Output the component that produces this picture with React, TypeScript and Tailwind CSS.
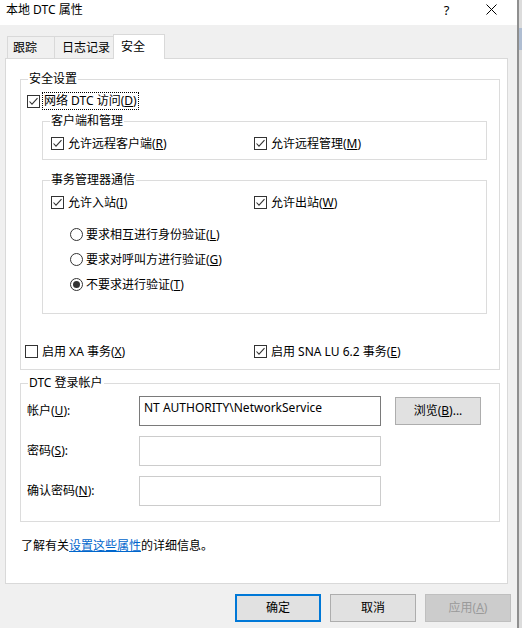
import type { ReactNode } from "react";

function Box({ checked }: { checked?: boolean }) {
  return (
    <span className="w-[13px] h-[13px] border border-[#333333] bg-white flex items-center justify-center shrink-0">
      {checked && (
        <svg width="11" height="11" viewBox="0 0 11 11">
          <path d="M1.5 5.5 L4 8.2 L9.5 2.2" stroke="#333333" strokeWidth="1.1" fill="none" />
        </svg>
      )}
    </span>
  );
}

function Radio({ checked }: { checked?: boolean }) {
  return (
    <span className="w-[13px] h-[13px] rounded-full border border-[#333333] bg-white flex items-center justify-center shrink-0">
      {checked && <span className="w-[7px] h-[7px] rounded-full bg-[#333333]" />}
    </span>
  );
}

function Check({ checked, children }: { checked?: boolean; children: ReactNode }) {
  return (
    <div className="flex items-center gap-[4px]">
      <Box checked={checked} />
      <span>{children}</span>
    </div>
  );
}

function Group({ title, className, children }: { title: string; className: string; children: ReactNode }) {
  return (
    <fieldset className={"border border-[#dcdcdc] min-w-0 " + className}>
      <legend className="ml-[7px] px-[1px] leading-[14px]">{title}</legend>
      {children}
    </fieldset>
  );
}

function Field({ label, value, focus }: { label: ReactNode; value?: string; focus?: boolean }) {
  return (
    <div className="flex items-center h-[30px]">
      <span className="w-[112px]">{label}</span>
      <div
        className={
          "w-[242px] h-[30px] bg-white border pl-[4px] pt-[4px] " +
          (focus ? "border-[#7a7a7a]" : "border-[#cccccc]")
        }
      >
        {value}
      </div>
    </div>
  );
}

export default function App() {
  return (
    <div className="flex w-[522px] h-[628px] bg-[#f0f0f0] text-[12px] leading-[14px] text-black font-[family-name:'Noto_Sans','Noto_Sans_CJK_SC',sans-serif]">
      <div className="w-[517px] flex flex-col">
        {/* title bar */}
        <div className="h-[25px] bg-white flex items-start pt-[3px] pl-[6px]">
          <span className="text-[12px]">本地 DTC 属性</span>
          <span className="ml-[361px] text-[13px] leading-[14px]">?</span>
          <svg className="ml-[37px] mt-[1px]" width="11" height="11" viewBox="0 0 11 11">
            <path d="M0.5 0.5 L10.5 10.5 M10.5 0.5 L0.5 10.5" stroke="#000" strokeWidth="1" />
          </svg>
        </div>

        <div className="pl-[5px] flex flex-col">
          {/* tabs */}
          <div className="mt-[9px] h-[24px] flex items-end pl-[2px]">
            <div className="w-[47px] h-[22px] border-l border-t border-[#d9d9d9] flex items-center pl-[5px]">跟踪</div>
            <div className="w-[59px] h-[22px] border-l border-t border-[#d9d9d9] flex items-center pl-[7px]">日志记录</div>
            <div className="relative z-10 w-[52px] h-[25px] -mb-px bg-white border-l border-t border-r border-[#d9d9d9] flex items-center pl-[7px] pb-[1px]">
              安全
            </div>
          </div>

          {/* panel */}
          <div className="w-[503px] h-[526px] bg-white border border-[#d9d9d9] flex flex-col">
            <Group title="安全设置" className="ml-[14px] mt-[13px] w-[480px] pb-[9px]">
              <div className="ml-[6px] mt-[6px] h-[18px] flex items-center gap-[2px]">
                <Box checked />
                <span className="border border-dotted border-black px-[1px] h-[18px] flex items-center">
                  网络 DTC 访问(<u>D</u>)
                </span>
              </div>

              <Group title="客户端和管理" className="ml-[21px] mt-[4px] w-[445px] pb-[7px]">
                <div className="ml-[8px] mt-[7px] h-[17px] flex items-center">
                  <div className="w-[203px]">
                    <Check checked>
                      允许远程客户端(<u>R</u>)
                    </Check>
                  </div>
                  <Check checked>
                    允许远程管理(<u>M</u>)
                  </Check>
                </div>
              </Group>

              <Group title="事务管理器通信" className="ml-[21px] mt-[13px] w-[445px] pb-[20px]">
                <div className="ml-[8px] mt-[7px] h-[17px] flex items-center">
                  <div className="w-[203px]">
                    <Check checked>
                      允许入站(<u>I</u>)
                    </Check>
                  </div>
                  <Check checked>
                    允许出站(<u>W</u>)
                  </Check>
                </div>
                <div className="ml-[27px] mt-[15px] flex flex-col gap-[8px]">
                  <div className="h-[17px] flex items-center gap-[3px]">
                    <Radio />
                    <span>
                      要求相互进行身份验证(<u>L</u>)
                    </span>
                  </div>
                  <div className="h-[17px] flex items-center gap-[3px]">
                    <Radio />
                    <span>
                      要求对呼叫方进行验证(<u>G</u>)
                    </span>
                  </div>
                  <div className="h-[17px] flex items-center gap-[3px]">
                    <Radio checked />
                    <span>
                      不要求进行验证(<u>T</u>)
                    </span>
                  </div>
                </div>
              </Group>

              <div className="ml-[4px] mt-[29px] h-[17px] flex items-center">
                <div className="w-[229px]">
                  <Check>
                    启用 XA 事务(<u>X</u>)
                  </Check>
                </div>
                <Check checked>
                  启用 SNA LU 6.2 事务(<u>E</u>)
                </Check>
              </div>
            </Group>

            <Group title="DTC 登录帐户" className="ml-[14px] mt-[6px] w-[480px] pb-[15px]">
              <div className="ml-[6px] mt-[6px] flex flex-col gap-[10px]">
                <div className="flex items-start">
                  <Field
                    label={
                      <>
                        帐户(<u>U</u>):
                      </>
                    }
                    value="NT AUTHORITY\NetworkService"
                    focus
                  />
                  <button className="ml-[14px] mt-[1px] w-[86px] h-[28px] bg-[#e1e1e1] border border-[#adadad] flex items-center justify-center">
                    浏览(<u>B</u>)...
                  </button>
                </div>
                <Field
                  label={
                    <>
                      密码(<u>S</u>):
                    </>
                  }
                />
                <Field
                  label={
                    <>
                      确认密码(<u>N</u>):
                    </>
                  }
                />
              </div>
            </Group>

            <p className="ml-[15px] mt-[17px]">
              了解有关<span className="text-[#0066cc] underline">设置这些属性</span>的详细信息。
            </p>
          </div>

          {/* buttons */}
          <div className="mt-[10px] ml-[230px] flex gap-[9px]">
            <button className="w-[86px] h-[28px] bg-[#e1e1e1] border-2 border-[#0078d7] flex items-center justify-center">
              确定
            </button>
            <button className="w-[86px] h-[28px] bg-[#e1e1e1] border border-[#adadad] flex items-center justify-center">
              取消
            </button>
            <button className="w-[86px] h-[28px] bg-[#cccccc] border border-[#bfbfbf] text-[#9a9a9a] flex items-center justify-center">
              应用(<u>A</u>)
            </button>
          </div>
        </div>
      </div>

      {/* edge of window behind */}
      <div className="w-[2px] bg-[#8f8f8f]" />
      <div className="flex-1 flex flex-col bg-[#dcdcdc]">
        <div className="h-[28px]" />
        <div className="h-[22px] bg-[#b0bed2]" />
      </div>
    </div>
  );
}
